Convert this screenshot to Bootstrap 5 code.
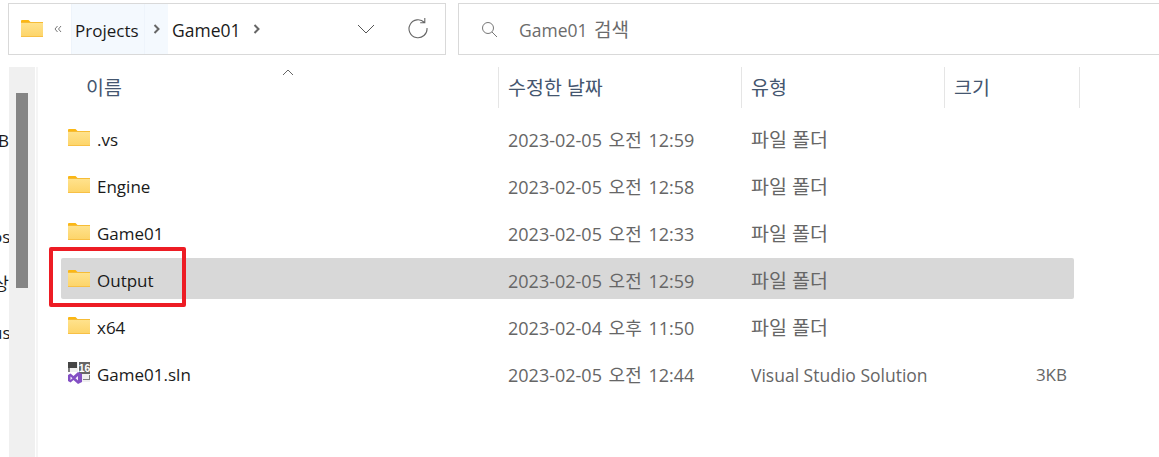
<!DOCTYPE html>
<html lang="ko">
  <head>
    <meta charset="UTF-8" />
    <meta name="viewport" content="width=device-width, initial-scale=1.0" />
    <title>Game01</title>
    <link href="https://cdn.jsdelivr.net/npm/bootstrap@5.3.0/dist/css/bootstrap.min.css" rel="stylesheet" />
    <style>
      html, body { height: 457px; overflow: hidden; background: #fff; }
      body { font-family: "Open Sans", "Noto Sans CJK KR", sans-serif; font-size: 17px; color: #1a1a1a; }
      .toolbar { height: 52px; margin: 3px 0 0 8px; gap: 12px; }
      .addr-box, .search-box { border: 1px solid #d9d9d9; background: #fff; }
      .addr-box { width: 438px; flex: none; }
      .search-box { flex: 1; margin-right: -10px; color: #6b6b6b; padding-left: 22px; font-size: 17.5px; }
      .search-box span { margin-left: 21px; padding-top: 3px; }
      .search-box b { font-weight: 400; font-size: 19px; margin-left: 2px; }
      .folder-top { width: 22px; height: 17px; margin-left: 12px; margin-top: -1px; flex: none; }
      .dbl-chev { margin: 0 9px 0 11px; flex: none; }
      .crumb { height: 50px; display: flex; align-items: center; padding-top: 3px; }
      .crumb-hover { background: #f4f9fe; border-left: 1px solid #eef4fb; }
      .crumb-a { width: 73px; padding-left: 3px; }
      .crumb-b { width: 24px; justify-content: center; padding-top: 0; }
      .crumb-c { margin-left: 4px; font-size: 17.5px; }
      .arrow-c { margin-left: 12px; }
      .drop-chev { margin-left: auto; }
      .reload { margin: -3px 16px 0 32px; }
      .main-area { height: 390px; margin-top: 12px; }
      .side-clip { width: 9px; flex: none; overflow: hidden; }
      .side-text { margin-left: -8px; width: 17px; text-align: right; white-space: nowrap; line-height: 24px; }
      .side-text div { height: 24px; }
      .s1 { margin-top: 62px; }
      .s2 { margin-top: 72px; }
      .s3 { margin-top: 23px; }
      .s4 { margin-top: 25px; }
      .scroll-track { width: 26px; flex: none; background: #f0f0f0; padding: 26px 7px 0; }
      .scroll-thumb { height: 195px; background: #858585; }
      .pane { flex: 1; border-left: 2px solid #f5f5f5; margin-left: 1px; }
      .head-row { height: 41px; color: #44566f; font-size: 19.5px; }
      .head-cell { display: flex; align-items: center; height: 41px; padding: 1px 0 0 9px; border-right: 1px solid #e5e5e5; }
      .c-name { width: 461px; padding-left: 48px; position: relative; }
      .c-date { width: 243px; }
      .c-type { width: 203px; }
      .c-size { width: 135px; }
      .sort-up { position: absolute; top: 2px; left: 244px; }
      .file-list { padding: 9px 0 0 23px; width: 1036px; }
      .file-row { height: 41px; margin-bottom: 6px; border-radius: 2px; color: #666; padding-top: 5px; }
      .file-row.picked { background: #d8d8d8; }
      .col-nm { width: 437px; display: flex; align-items: center; color: #1a1a1a; padding-left: 7px; }
      .col-nm svg { width: 22px; height: 17px; margin-right: 7px; margin-top: -5px; flex: none; }
      .col-nm svg.sln-icon { height: 22px; }
      .col-dt { width: 243px; padding-left: 10px; font-size: 18px; white-space: nowrap; word-spacing: 2px; }
      .col-tp { width: 240px; padding-left: 10px; white-space: nowrap; font-size: 19.5px; }
      .col-tp.en { width: 176px; font-size: 17.5px; }
      .col-sz { width: 150px; text-align: right; }
      .red-mark { position: absolute; left: -12px; top: -11px; border: 4px solid #ed1c24; border-radius: 2px; width: 137px; height: 60px; }
    </style>
  </head>
  <body>
    <svg width="0" height="0" class="d-block">
      <defs>
        <linearGradient id="fg" x1="0" y1="0" x2="0" y2="1">
          <stop offset="0" stop-color="#ffe38f" />
          <stop offset="1" stop-color="#fdd468" />
        </linearGradient>
        <symbol id="folder" viewBox="0 0 22 17">
          <path d="M0 1a1 1 0 0 1 1-1h6.5l2.5 2.5h-10z" fill="#fbb714" />
          <rect x="0" y="2" width="22" height="15" rx="0.6" fill="url(#fg)" />
          <rect x="0" y="2" width="22" height="1" fill="#f6bc36" />
          <rect x="0" y="16" width="22" height="1" fill="#f8c045" />
        </symbol>
      </defs>
    </svg>

    <div class="toolbar d-flex">
      <div class="addr-box d-flex align-items-center">
        <svg class="folder-top"><use href="#folder" /></svg>
        <svg class="dbl-chev" width="8" height="8" viewBox="0 0 8 8"><path d="M3.5 1L1 4l2.500 3M7 1L4.500 4 7 7" fill="none" stroke="#777" stroke-width="1" /></svg>
        <div class="crumb crumb-hover crumb-a">Projects</div>
        <div class="crumb crumb-hover crumb-b">
          <svg width="8" height="10" viewBox="0 0 8 10"><path d="M1.5 1l4 4-4 4" fill="none" stroke="#666" stroke-width="2" /></svg>
        </div>
        <div class="crumb crumb-c">Game01</div>
        <svg class="arrow-c" width="8" height="10" viewBox="0 0 8 10"><path d="M1.5 1l4 4-4 4" fill="none" stroke="#666" stroke-width="2" /></svg>
        <svg class="drop-chev" width="18" height="10" viewBox="0 0 18 10"><path d="M1 1l8 8 8-8" fill="none" stroke="#555" stroke-width="1" /></svg>
        <svg class="reload" width="22" height="22" viewBox="0 0 22 22"><path d="M17.5 5.500A9 9 0 1 0 20 11M17.800 1v4.800h-4.600" fill="none" stroke="#666" stroke-width="1.1" /></svg>
      </div>
      <div class="search-box d-flex align-items-center">
        <svg width="17" height="17" viewBox="0 0 17 17"><circle cx="7" cy="7" r="5.5" fill="none" stroke="#777" stroke-width="1" /><path d="M11 11l5 5" stroke="#777" stroke-width="1" /></svg>
        <span>Game01 <b>검색</b></span>
      </div>
    </div>

    <div class="main-area d-flex">
      <div class="side-clip">
        <div class="side-text">
          <div class="s1">B</div><div class="s2">os</div><div class="s3">상</div><div class="s4">us</div>
        </div>
      </div>
      <div class="scroll-track"><div class="scroll-thumb"></div></div>
      <div class="pane">
        <div class="head-row d-flex">
          <div class="head-cell c-name">이름
            <svg class="sort-up" width="12" height="7" viewBox="0 0 12 7"><path d="M1 6l5-5 5 5" fill="none" stroke="#666" stroke-width="1" /></svg>
          </div>
          <div class="head-cell c-date">수정한 날짜</div>
          <div class="head-cell c-type">유형</div>
          <div class="head-cell c-size">크기</div>
        </div>
        <div class="file-list">
          <div class="file-row d-flex align-items-center">
            <div class="col-nm"><svg><use href="#folder" /></svg>.vs</div>
            <div class="col-dt">2023-02-05 오전 12:59</div><div class="col-tp">파일 폴더</div>
          </div>
          <div class="file-row d-flex align-items-center">
            <div class="col-nm"><svg><use href="#folder" /></svg>Engine</div>
            <div class="col-dt">2023-02-05 오전 12:58</div><div class="col-tp">파일 폴더</div>
          </div>
          <div class="file-row d-flex align-items-center">
            <div class="col-nm"><svg><use href="#folder" /></svg>Game01</div>
            <div class="col-dt">2023-02-05 오전 12:33</div><div class="col-tp">파일 폴더</div>
          </div>
          <div class="position-relative">
            <div class="file-row picked d-flex align-items-center">
              <div class="col-nm"><svg><use href="#folder" /></svg>Output</div>
              <div class="col-dt">2023-02-05 오전 12:59</div><div class="col-tp">파일 폴더</div>
            </div>
            <div class="red-mark"></div>
          </div>
          <div class="file-row d-flex align-items-center">
            <div class="col-nm"><svg><use href="#folder" /></svg>x64</div>
            <div class="col-dt">2023-02-04 오후 11:50</div><div class="col-tp">파일 폴더</div>
          </div>
          <div class="file-row d-flex align-items-center">
            <div class="col-nm">
              <svg class="sln-icon" viewBox="0 0 22 22">
                <rect x="0" y="0" width="10" height="10" fill="#f0f0f0" />
                <rect x="0" y="0" width="9" height="6" fill="#454545" />
                <rect x="0" y="6" width="2" height="4" fill="#808080" />
                <rect x="11" y="0" width="11" height="12" fill="#666" />
                <text x="16.5" y="10" font-size="10.5" font-weight="700" text-anchor="middle" fill="#fff" font-family="Liberation Sans, sans-serif">16</text>
                <rect x="11" y="12" width="11" height="8" fill="#f0f0f0" />
                <path d="M15 17h6v-4h1v5h-7z" fill="#808080" />
                <path d="M0 13l2.500-1.500 3 2.500 4.500-4 4 2v8l-4 2-4.500-4-3 2.500-2.500-1.500z" fill="#8350c4" />
                <path d="M2.500 14.500v3.500l2-1.800zM10 14l-2.500 2.200 2.500 2.300z" fill="#f3eefb" />
              </svg>Game01.sln
            </div>
            <div class="col-dt">2023-02-05 오전 12:44</div><div class="col-tp en">Visual Studio Solution</div><div class="col-sz">3KB</div>
          </div>
        </div>
      </div>
    </div>
  </body>
</html>
